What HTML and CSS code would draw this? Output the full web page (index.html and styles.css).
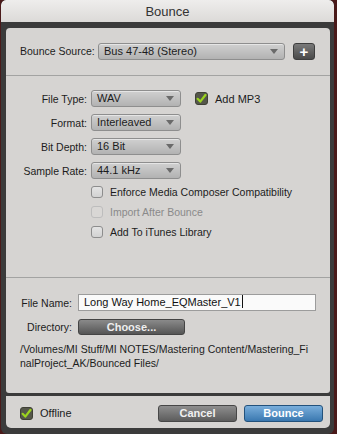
FILE: index.html
```html
<!DOCTYPE html>
<html lang="en">
<head>
    <meta charset="UTF-8">
    <meta name="viewport" content="width=device-width, initial-scale=1.0">
    <title>Bounce</title>
    <link rel="stylesheet" href="styles.css">
</head>
<body>

<div class="window">
    <div class="titlebar">Bounce</div>
    <div class="frame">

        <div class="panel source">
            <span class="source-label">Bounce Source:</span>
            <div class="select source-select">Bus 47-48 (Stereo)</div>
            <button class="add-btn">+</button>
        </div>

        <div class="panel options">
            <div class="row">
                <span class="label">File Type:</span>
                <div class="select">WAV</div>
                <label class="check mp3"><span class="box checked"></span>Add MP3</label>
            </div>
            <div class="row">
                <span class="label">Format:</span>
                <div class="select">Interleaved</div>
            </div>
            <div class="row">
                <span class="label">Bit Depth:</span>
                <div class="select">16 Bit</div>
            </div>
            <div class="row">
                <span class="label">Sample Rate:</span>
                <div class="select">44.1 kHz</div>
            </div>

            <div class="checks">
                <label class="check"><span class="box"></span>Enforce Media Composer Compatibility</label>
                <label class="check disabled"><span class="box"></span>Import After Bounce</label>
                <label class="check"><span class="box"></span>Add To iTunes Library</label>
            </div>
        </div>

        <div class="panel file">
            <div class="row">
                <span class="label short">File Name:</span>
                <div class="text-input">Long Way Home_EQMaster_V1<span class="caret"></span></div>
            </div>
            <div class="row">
                <span class="label short">Directory:</span>
                <button class="choose-btn">Choose...</button>
            </div>
            <p class="path">/Volumes/MI Stuff/MI NOTES/Mastering Content/Mastering_FinalProject_AK/Bounced Files/</p>
        </div>

        <div class="footer">
            <label class="check offline"><span class="box checked"></span>Offline</label>
            <div class="buttons">
                <button class="btn cancel">Cancel</button>
                <button class="btn bounce">Bounce</button>
            </div>
        </div>

    </div>
</div>

</body>
</html>
```

FILE: styles.css
```css
body {
    margin: 0;
    padding: 0;
    background-color: #4a1a1a;
    font-family: 'Liberation Sans', Arial, sans-serif;
    font-size: 10.5px;
    color: #1c1c1c;
}
.window {
    width: 333px;
    height: 434px;
    margin-left: 1px;
    display: flex;
    flex-direction: column;
    background-color: #3b3b3b;
    border-radius: 5px 5px 6px 6px;
    overflow: hidden;
}
.titlebar {
    height: 22px;
    line-height: 24px;
    text-align: center;
    font-size: 13px;
    color: #333;
    background: linear-gradient(#eeedec, #dcdad8);
    border-radius: 5px 5px 0 0;
}
.frame {
    flex: 1;
    padding: 6px 4px 6px 5px;
    display: flex;
    flex-direction: column;
}
.panel {
    background-color: #d6d4d2;
    border-bottom: 1px solid #a3a3a2;
}
.source {
    border-radius: 4px 4px 0 0;
    display: flex;
    align-items: flex-start;
    padding: 15px 0 0 14px;
    box-sizing: border-box;
    height: 48px;
}
.source-label {
    width: 78px;
    line-height: 17px;
}
.select {
    position: relative;
    width: 90px;
    height: 17px;
    box-sizing: border-box;
    padding-left: 5px;
    border: 1px solid #8e8e8e;
    border-radius: 3px;
    background: linear-gradient(#d0d0d0, #b2b2b2);
    box-shadow: inset 0 1px 0 rgba(255, 255, 255, 0.45);
    font-size: 11px;
    line-height: 15px;
}
.select::after {
    content: "";
    position: absolute;
    right: 6px;
    top: 5px;
    border-left: 4px solid transparent;
    border-right: 4px solid transparent;
    border-top: 5px solid #6a6a6a;
}
.source-select {
    width: 187px;
}
.add-btn {
    margin-left: 8px;
    width: 22px;
    height: 17px;
    padding: 0;
    border: 1px solid #3e3e3e;
    border-radius: 3px;
    background: linear-gradient(#7a7a7a, #4a4a4a);
    color: #fff;
    font-family: 'Liberation Sans', Arial, sans-serif;
    font-weight: bold;
    font-size: 15px;
    line-height: 13px;
}
.options {
    height: 202px;
    box-sizing: border-box;
    padding-top: 14px;
}
.row {
    display: flex;
    align-items: center;
    height: 17px;
    margin-bottom: 7px;
}
.label {
    width: 81px;
    margin-right: 4px;
    text-align: right;
}
.check {
    display: flex;
    align-items: center;
    gap: 7px;
    height: 12px;
}
.box {
    width: 12px;
    height: 12px;
    box-sizing: border-box;
    border: 1px solid #8d8d8d;
    border-radius: 3px;
    background: linear-gradient(#e4e4e4, #d2d2d2);
}
.box.checked {
    width: 13px;
    height: 13px;
    border-color: #3f4036;
    background: #55574a url("data:image/svg+xml;utf8,<svg xmlns='http://www.w3.org/2000/svg' viewBox='0 0 13 13'><path d='M2.6 6.8 L5.3 9.6 L10.6 2.8' fill='none' stroke='%239bd41e' stroke-width='2.2' stroke-linecap='round' stroke-linejoin='round'/></svg>") no-repeat center / 13px 13px;
}
.mp3 {
    margin-left: 14px;
    font-size: 11px;
}
.checks {
    margin: 4px 0 0 85px;
    display: flex;
    flex-direction: column;
    gap: 8px;
}
.check.disabled {
    color: #8a8a8a;
}
.check.disabled .box {
    border-color: #bdbdbd;
    background: #d9d7d5;
}
.file {
    height: 115px;
    box-sizing: border-box;
    padding-top: 16px;
    border-bottom: none;
    border-radius: 0 0 3px 3px;
}
.label.short {
    width: 66px;
    margin-right: 6px;
}
.text-input {
    width: 238px;
    height: 17px;
    box-sizing: border-box;
    padding-left: 5px;
    border: 1px solid #9c9c9c;
    background-color: #fafafa;
    font-size: 11px;
    line-height: 15px;
    color: #111;
}
.caret {
    display: inline-block;
    width: 1px;
    height: 13px;
    margin-left: 1px;
    vertical-align: -2px;
    background-color: #111;
}
.choose-btn {
    width: 107px;
    height: 16px;
    padding: 0;
    border: 1px solid #444;
    border-radius: 3px;
    background: linear-gradient(#8a8a8a, #555);
    color: #eee;
    font-family: 'Liberation Sans', Arial, sans-serif;
    font-weight: bold;
    font-size: 11px;
}
.path {
    margin: 1px 0 0 14px;
    width: 292px;
    line-height: 14px;
    word-break: break-all;
}
.footer {
    margin-top: 3px;
    height: 32px;
    display: flex;
    align-items: center;
    justify-content: space-between;
    padding: 2px 7px 0 14px;
    box-sizing: border-box;
    background-color: #d6d4d2;
    border-radius: 0 0 5px 5px;
}
.offline {
    height: 13px;
    font-size: 11px;
}
.buttons {
    display: flex;
    gap: 7px;
}
.btn {
    width: 79px;
    height: 17px;
    padding: 0;
    border-radius: 3px;
    font-family: 'Liberation Sans', Arial, sans-serif;
    font-weight: bold;
    font-size: 11px;
    color: #f0f0f0;
}
.cancel {
    border: 1px solid #474747;
    background: linear-gradient(#8e8e8e, #5c5c5c);
}
.bounce {
    border: 1px solid #23527c;
    background: linear-gradient(#79aedb, #3a78b0);
    color: #fff;
}
```
